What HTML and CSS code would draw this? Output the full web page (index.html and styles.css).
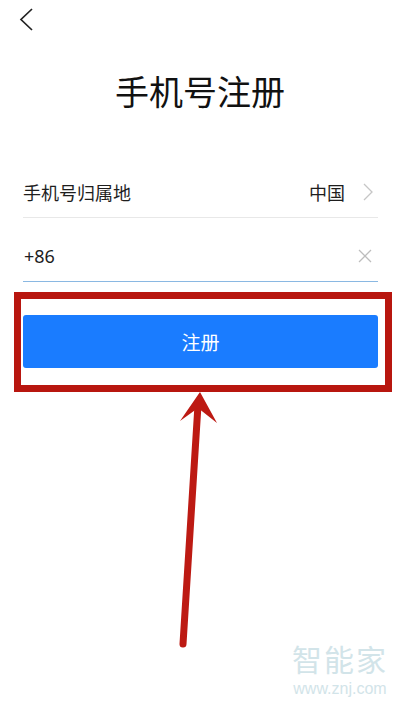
FILE: index.html
```html
<!DOCTYPE html>
<html lang="zh-CN">

<head>
    <meta charset="UTF-8">
    <meta name="viewport" content="width=device-width, initial-scale=1.0">
    <title>手机号注册</title>
    <link rel="stylesheet" href="styles.css">
</head>

<body>
    <div class="page">
        <div class="header">
            <svg class="back-icon" width="16" height="24" viewBox="0 0 16 24">
                <polyline points="14,1 3,11.5 14,22" />
            </svg>
        </div>

        <h1 class="title">手机号注册</h1>

        <div class="form">
            <div class="form-row form-row-region">
                <span class="form-label">手机号归属地</span>
                <span class="form-value">
                    中国
                    <svg class="chevron-icon" width="10" height="18" viewBox="0 0 10 18">
                        <polyline points="1,1 9,9 1,17" />
                    </svg>
                </span>
            </div>

            <div class="form-row form-row-phone">
                <span class="form-input">+86</span>
                <svg class="clear-icon" width="14" height="14" viewBox="0 0 14 14">
                    <line x1="1" y1="1" x2="13" y2="13" />
                    <line x1="13" y1="1" x2="1" y2="13" />
                </svg>
            </div>

            <div class="highlight-box">
                <button class="submit-btn">注册</button>
            </div>
        </div>

        <!-- annotation arrow pointing at the button -->
        <svg class="arrow" width="400" height="710" viewBox="0 0 400 710">
            <line x1="198" y1="405" x2="183" y2="644" />
            <polygon points="200,392 217,423 198,408 180,421" />
        </svg>

        <div class="watermark">
            <div class="watermark-name">智能家</div>
            <div class="watermark-url">www.znj.com</div>
        </div>
    </div>
</body>

</html>
```

FILE: styles.css
```css
* {
    box-sizing: border-box;
}

body {
    margin: 0;
    background: #ffffff;
    font-family: "Noto Sans CJK SC", "Noto Sans", sans-serif;
    color: #1a1a1a;
}

.page {
    position: relative;
    width: 400px;
    height: 710px;
    overflow: hidden;
}

.header {
    height: 40px;
    padding: 8px 0 0 18px;
}

.back-icon {
    display: block;
    fill: none;
    stroke: #222222;
    stroke-width: 1.7;
}

.title {
    margin: 30px 0 0 0;
    font-size: 34px;
    line-height: 41px;
    font-weight: normal;
    text-align: center;
    color: #111111;
}

.form {
    margin-top: 55px;
    padding: 0 22px 0 23px;
}

.form-row {
    display: flex;
    align-items: center;
    justify-content: space-between;
}

.form-row-region {
    height: 52px;
    border-bottom: 1px solid #e8e8e8;
}

.form-label,
.form-value,
.form-input {
    font-size: 18px;
    line-height: 24px;
    color: #1e1e1e;
}

.form-value {
    display: flex;
    align-items: center;
}

.chevron-icon {
    display: block;
    margin: 0 5px 0 18px;
    fill: none;
    stroke: #c6c6c6;
    stroke-width: 1.3;
}

.form-row-phone {
    padding: 26px 0 13px 0;
    border-bottom: 1px solid #8ab8e2;
}

.form-input {
    font-family: "Noto Sans", "Noto Sans CJK SC", sans-serif;
    padding-left: 1px;
}

.clear-icon {
    display: block;
    margin-right: 6px;
    stroke: #bdbdbd;
    stroke-width: 1.3;
}

.highlight-box {
    margin: 10px -14px 0 -9px;
    padding: 16px 7px 17px 2px;
    border: 7px solid #b8160f;
}

.submit-btn {
    display: block;
    width: 100%;
    height: 53px;
    border: none;
    border-radius: 3px;
    background: #1a7cff;
    color: #ffffff;
    font-family: "Noto Sans CJK SC", sans-serif;
    font-size: 19px;
}

.arrow {
    position: absolute;
    left: 0;
    top: 0;
    pointer-events: none;
}

.arrow line {
    stroke: #bd1a13;
    stroke-width: 7;
    stroke-linecap: round;
}

.arrow polygon {
    fill: #bd1a13;
}

.watermark {
    position: absolute;
    right: 12px;
    bottom: 12px;
    display: flex;
    flex-direction: column;
    align-items: center;
    color: #d2e4e9;
}

.watermark-name {
    font-size: 30px;
    line-height: normal;
    letter-spacing: 2px;
}

.watermark-url {
    font-family: "Liberation Sans", sans-serif;
    font-size: 16px;
    line-height: normal;
}
```
